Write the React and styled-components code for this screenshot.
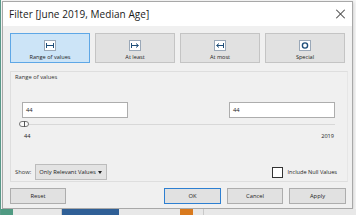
import React from 'react'
import styled, { createGlobalStyle } from 'styled-components'

const GlobalStyle = createGlobalStyle`
  html, body {
    margin: 0;
    padding: 0;
    background: #f4f4f4;
    font-family: "Open Sans", "Liberation Sans", sans-serif;
  }
  #root {
    width: 356px;
    height: 215px;
    overflow: hidden;
    position: relative;
  }
`

const Backdrop = styled.div`
  width: 356px;
  height: 215px;
  background: #f7f7f7;
  display: flex;
  flex-direction: column;
  border-left: 1px solid #5a9a8a;
  box-sizing: border-box;
`

const BottomStrip = styled.div`
  display: flex;
  height: 6px;
  margin-top: auto;
  background: #e8e8e8;
`

const StripPart = styled.div`
  width: ${p => p.$w}px;
  background: ${p => p.$c};
  border-right: ${p => (p.$line ? '1px solid #c8c8c8' : 'none')};
`

const Dialog = styled.div`
  margin: 1px 0 0 1px;
  width: 351px;
  height: 208px;
  box-sizing: border-box;
  border: 1px solid #a8a8a8;
  background: #f0f0f0;
  display: flex;
  flex-direction: column;
  box-shadow: 1px 1px 3px rgba(0, 0, 0, 0.15);
`

const TitleBar = styled.div`
  height: 24px;
  background: #fff;
  display: flex;
  align-items: center;
  justify-content: space-between;
  padding: 0 7px 0 6px;
  flex-shrink: 0;
`

const Title = styled.div`
  font-size: 10px;
  color: #1a1a1a;
  letter-spacing: 0.05px;
`

const Close = styled.div`
  width: 10px;
  height: 10px;
  position: relative;
  &::before, &::after {
    content: '';
    position: absolute;
    left: 4.5px;
    top: -1px;
    width: 1px;
    height: 12px;
    background: #444;
  }
  &::before { transform: rotate(45deg); }
  &::after { transform: rotate(-45deg); }
`

const Body = styled.div`
  flex: 1;
  padding: 7px 6px 0 7px;
  display: flex;
  flex-direction: column;
`

const ModeRow = styled.div`
  display: grid;
  grid-template-columns: repeat(4, 80px);
  column-gap: 5px;
  height: 30px;
`

const ModeButton = styled.div`
  box-sizing: border-box;
  border: 1px solid ${p => (p.$active ? '#5ea7e6' : '#c4c4c4')};
  background: ${p => (p.$active ? '#cce4f7' : '#e1e1e1')};
  display: flex;
  flex-direction: column;
  align-items: center;
  justify-content: flex-start;
  padding-top: 6px;
  gap: 2px;
`

const ModeIcon = styled.svg`
  width: 12px;
  height: 11px;
`

const ModeLabel = styled.div`
  font-size: 5.6px;
  color: #222;
`

const Group = styled.div`
  margin-top: 8px;
  height: 111px;
  box-sizing: border-box;
  border: 1px solid #dedede;
  border-right-color: #e6e6e6;
  padding: 1px 0 0 4px;
  display: flex;
  flex-direction: column;
  width: 338px;
`

const GroupLabel = styled.div`
  font-size: 5.8px;
  color: #333;
`

const InputRow = styled.div`
  display: flex;
  justify-content: space-between;
  margin: 21px 12px 0 7px;
`

const ValueInput = styled.div`
  width: 106px;
  height: 16px;
  box-sizing: border-box;
  border: 1px solid #adadad;
  background: #fff;
  font-size: 5.8px;
  color: #222;
  display: flex;
  align-items: center;
  padding-left: 3px;
`

const SliderWrap = styled.div`
  position: relative;
  margin: 4px 12px 0 4px;
  height: 5px;
`

const Track = styled.div`
  height: 1px;
  background: #d8d8d8;
  margin-top: 2px;
`

const Thumb = styled.div`
  position: absolute;
  left: 0;
  top: -1px;
  width: 10px;
  height: 6px;
  box-sizing: border-box;
  border: 1px solid #777;
  border-radius: 3px;
  background: #fafafa;
  &::after {
    content: '';
    position: absolute;
    left: 3.5px;
    top: -1px;
    width: 1px;
    height: 6px;
    background: #555;
  }
`

const EndLabels = styled.div`
  display: flex;
  justify-content: space-between;
  margin: 5px 13px 0 9px;
  font-size: 5.6px;
  color: #222;
`

const FooterRow = styled.div`
  margin-top: auto;
  display: flex;
  align-items: center;
  justify-content: space-between;
  padding: 0 10px 1px 0;
`

const ShowGroup = styled.div`
  display: flex;
  align-items: center;
  gap: 4px;
  font-size: 5.8px;
  color: #333;
`

const Select = styled.div`
  width: 72px;
  height: 16px;
  box-sizing: border-box;
  border: 1px solid #bcbcbc;
  background: #e3e3e3;
  display: flex;
  align-items: center;
  justify-content: space-between;
  padding: 0 4px 0 3px;
  color: #222;
`

const Caret = styled.div`
  width: 0;
  height: 0;
  border-left: 2.5px solid transparent;
  border-right: 2.5px solid transparent;
  border-top: 3px solid #222;
`

const CheckGroup = styled.div`
  display: flex;
  align-items: center;
  gap: 4px;
  font-size: 5.6px;
  color: #222;
`

const Box = styled.div`
  width: 11px;
  height: 11px;
  box-sizing: border-box;
  border: 1px solid #333;
  background: #fff;
`

const ButtonBar = styled.div`
  display: flex;
  align-items: center;
  padding-top: 6px;
  gap: 6px;
`

const Button = styled.div`
  width: ${p => (p.$narrow ? 56 : 57)}px;
  height: 16px;
  box-sizing: border-box;
  border: 1px solid ${p => (p.$primary ? '#2d7fd1' : '#adadad')};
  background: #e1e1e1;
  display: flex;
  align-items: center;
  justify-content: center;
  font-size: 5.8px;
  color: #222;
  margin-left: ${p => (p.$push ? 'auto' : '0')};
`

const icons = {
  range: (
    <>
      <rect x="0.5" y="0.5" width="11" height="10" fill="#fff" stroke="#9aa8b8" />
      <line x1="2.5" y1="5.5" x2="9.5" y2="5.5" stroke="#1f4e79" strokeWidth="1" />
      <line x1="2.5" y1="3" x2="2.5" y2="8" stroke="#1f4e79" strokeWidth="1" />
      <line x1="9.5" y1="3" x2="9.5" y2="8" stroke="#1f4e79" strokeWidth="1" />
    </>
  ),
  least: (
    <>
      <rect x="0.5" y="0.5" width="11" height="10" fill="#fff" stroke="#9aa8b8" />
      <line x1="2.5" y1="3" x2="2.5" y2="8" stroke="#1f4e79" />
      <line x1="2.5" y1="5.5" x2="9" y2="5.5" stroke="#1f4e79" />
      <path d="M7 3.5 L9.5 5.5 L7 7.5" fill="none" stroke="#1f4e79" />
    </>
  ),
  most: (
    <>
      <rect x="0.5" y="0.5" width="11" height="10" fill="#fff" stroke="#9aa8b8" />
      <line x1="9.5" y1="3" x2="9.5" y2="8" stroke="#1f4e79" />
      <line x1="3" y1="5.5" x2="9.5" y2="5.5" stroke="#1f4e79" />
      <path d="M5 3.5 L2.5 5.5 L5 7.5" fill="none" stroke="#1f4e79" />
    </>
  ),
  special: (
    <>
      <rect x="0.5" y="0.5" width="11" height="10" fill="#fff" stroke="#9aa8b8" />
      <circle cx="6" cy="5.5" r="2.6" fill="none" stroke="#1f4e79" strokeWidth="1.4" />
    </>
  ),
}

const modes = [
  { key: 'range', label: 'Range of values', active: true },
  { key: 'least', label: 'At least' },
  { key: 'most', label: 'At most' },
  { key: 'special', label: 'Special' },
]

export default function App() {
  return (
    <>
      <GlobalStyle />
      <Backdrop>
        <Dialog>
          <TitleBar>
            <Title>Filter [June 2019, Median Age]</Title>
            <Close />
          </TitleBar>
          <Body>
            <ModeRow>
              {modes.map(m => (
                <ModeButton key={m.key} $active={m.active}>
                  <ModeIcon viewBox="0 0 12 11">{icons[m.key]}</ModeIcon>
                  <ModeLabel>{m.label}</ModeLabel>
                </ModeButton>
              ))}
            </ModeRow>
            <Group>
              <GroupLabel>Range of values</GroupLabel>
              <InputRow>
                <ValueInput>44</ValueInput>
                <ValueInput>44</ValueInput>
              </InputRow>
              <SliderWrap>
                <Track />
                <Thumb />
              </SliderWrap>
              <EndLabels>
                <span>44</span>
                <span>2019</span>
              </EndLabels>
              <FooterRow>
                <ShowGroup>
                  <span>Show:</span>
                  <Select>
                    <span>Only Relevant Values</span>
                    <Caret />
                  </Select>
                </ShowGroup>
                <CheckGroup>
                  <Box />
                  <span>Include Null Values</span>
                </CheckGroup>
              </FooterRow>
            </Group>
            <ButtonBar>
              <Button $narrow>Reset</Button>
              <Button $primary $push>OK</Button>
              <Button $narrow>Cancel</Button>
              <Button>Apply</Button>
            </ButtonBar>
          </Body>
        </Dialog>
        <BottomStrip>
          <StripPart $w={12} $c="#4f9a82" />
          <StripPart $w={48} $c="#e8e8e8" $line />
          <StripPart $w={57} $c="#2f5f96" />
          <StripPart $w={61} $c="#e8e8e8" />
          <StripPart $w={13} $c="#d97a1e" />
          <StripPart $w={10} $c="#e8e8e8" $line />
        </BottomStrip>
      </Backdrop>
    </>
  )
}
